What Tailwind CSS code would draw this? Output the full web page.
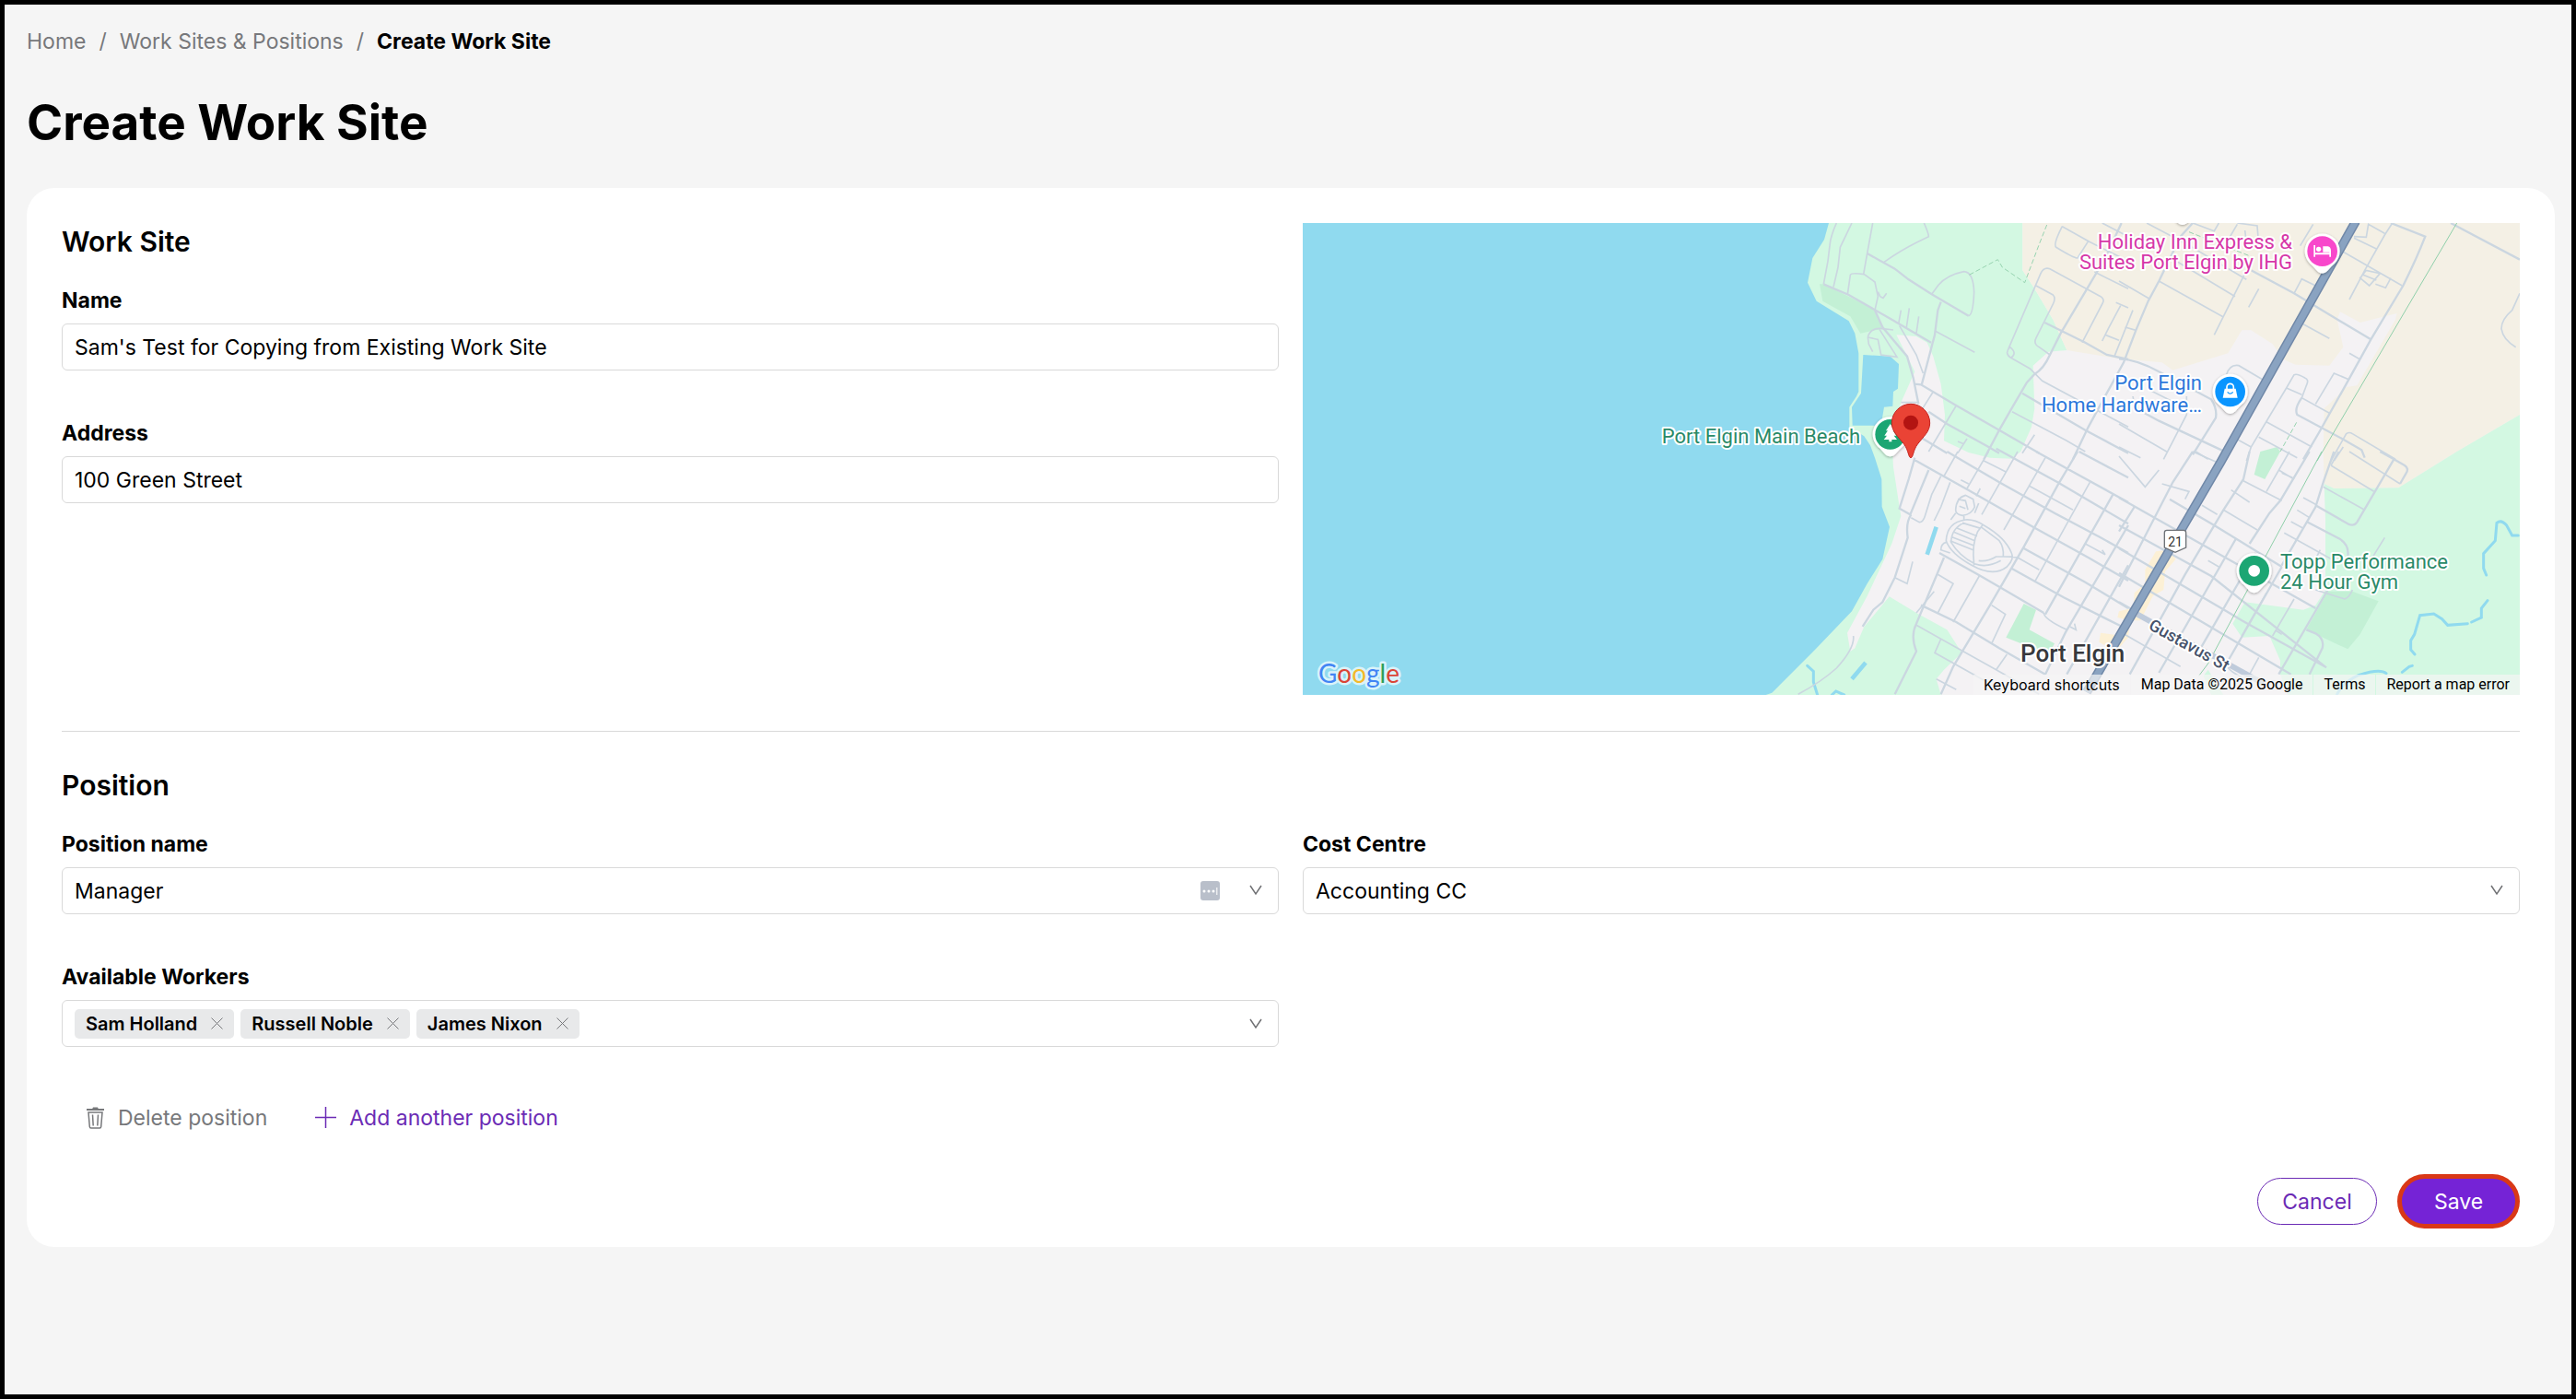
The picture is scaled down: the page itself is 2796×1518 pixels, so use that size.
<!DOCTYPE html>
<html lang="en">
<head>
<meta charset="utf-8">
<meta name="viewport" content="width=device-width, initial-scale=1">
<title>Create Work Site</title>
<script src="https://cdn.jsdelivr.net/npm/@tailwindcss/browser@4"></script>
</head>
<body class="min-h-screen border-5 border-black bg-[#f5f5f5] pt-[25px] pr-[18px] pb-6 pl-6 font-['Inter',sans-serif] text-[23px] leading-[30px] text-black">

<nav aria-label="Breadcrumb">
  <ol class="flex items-center gap-[14px] text-[#77787b]">
    <li><a href="#">Home</a></li>
    <li aria-hidden="true">/</li>
    <li><a href="#">Work Sites &amp; Positions</a></li>
    <li aria-hidden="true">/</li>
    <li aria-current="page" class="font-bold text-black">Create Work Site</li>
  </ol>
</nav>

<h1 class="mt-10 mb-[38px] text-[53px] leading-[66px] font-bold">Create Work Site</h1>

<form class="rounded-[30px] bg-white px-[38px] pt-[38px] pb-5">
  <section class="grid grid-cols-2 gap-[26px] border-b border-[#d9d9d9] pb-[39px]">
    <div>
      <h2 class="mb-[29px] text-[30px] leading-10 font-semibold">Work Site</h2>
      <label for="name" class="mb-2.5 block font-bold">Name</label>
      <input id="name" type="text" value="Sam's Test for Copying from Existing Work Site" class="mb-[53px] block h-[51px] w-full rounded-md border border-[#d9d9d9] bg-white px-[13px]">
      <label for="address" class="mb-2.5 block font-bold">Address</label>
      <input id="address" type="text" value="100 Green Street" class="block h-[51px] w-full rounded-md border border-[#d9d9d9] bg-white px-[13px]">
    </div>

    <div class="relative h-[512px] overflow-hidden">
      <svg class="block h-full w-full" viewBox="0 0 1321 512" preserveAspectRatio="xMidYMid slice" role="img" aria-label="Map of Port Elgin">
        <defs>
          <filter id="shadow" x="-30%" y="-30%" width="160%" height="160%"><feDropShadow dx="0" dy="3" stdDeviation="4" flood-color="#000" flood-opacity=".35"/></filter>
          <path id="pin" fill="#fff" d="M0 72C-16 72-26 50-40 40A57 57 0 1 1 40 40C26 50 16 72 0 72Z" filter="url(#shadow)"/>
        </defs>
        <rect width="1321" height="512" fill="#f4f2f4"/>

        <!-- land cover and water -->
        <g transform="translate(466 -12) scale(.33333)">
          <path fill="#d3f8e2" d="M300 36H946V190L985 250 1045 350 1090 450 1030 455 980 500 985 640 975 700 940 780 910 803 840 800 770 783 690 745 693 660 680 560 655 470 635 425 600 405 535 400 595 520 550 620 520 720 525 830 545 960 550 990 520 1080 440 1250 375 1370 385 1430 400 1420 430 1350 512 1252 600 1305 700 1360 748 1435 690 1490 665 1520 680 1572H100L200 36Z"/>
          <path fill="#f4f0e5" d="M946 36H2565V660L2360 780 2170 898 1960 900 1928 885 1925 780 1928 640 1960 610 2000 570 2035 565 2160 350 2165 330 2045 360 1980 325 1970 350 1990 440 1945 500 1835 497 1795 480 1760 430 1690 385 1660 385 1615 460 1435 515 1400 490 1260 478 1090 450 1045 350 985 250 946 190Z"/>
          <path fill="#d3f8e2" d="M2565 660 2360 780 2170 898 1960 900 1928 885 1932 1000V1230L1900 1280 1860 1295 1670 1270 1630 1340 1660 1385 1750 1380 1785 1460 1785 1505 1810 1572H2565ZM1550 1490 1535 1510 1560 1572 1600 1572Z"/>
          <path fill="#c3f0d5" d="M285 235 298 235 465 318 490 380 418 395 385 340 330 310 295 290ZM950 1275 990 1295 968 1360 1050 1405 1030 1440 892 1385ZM1720 780 1775 765 1785 780 1735 870 1700 855ZM1940 1235H2020L2105 1267 2045 1375 2005 1423 1870 1360Z"/>
          <path fill="#90daef" d="M-1398 36H315L300 90 262 150 246 230 275 290 380 355 400 395 412 460V585L405 600 382 635V700L430 730 450 760 465 800 487 870 488 960 513 1025 490 1130 440 1210 390 1300 270 1425 130 1565 110 1572H-1398Z"/>
          <path fill="#90daef" d="M427 465 515 470 543 495 540 575 525 585 523 632 495 635 485 695H392L390 635 420 590Z"/>
          <path fill="#fcf0d5" d="M1290 1385 1300 1290 1260 1300 1255 1320 1275 1325 1270 1380 1200 1370 1195 1400 1250 1430ZM1380 1105 1420 1100 1445 1130 1410 1170 1405 1230 1370 1250 1330 1330 1305 1330 1310 1240 1345 1210 1345 1165Z"/>
          <g fill="none" stroke="#90daef" stroke-width="14"><path d="M665 1025 635 1115M435 1467 390 1520"/>
          <path stroke-width="9" stroke-linecap="round" d="M245 1477 265 1495V1530L278 1572M325 1572 338 1560 365 1572M2560 1053H2540L2522 1020Q2505 1000 2490 1012L2485 1070 2447 1112V1160L2456 1182M2460 1265 2440 1290V1320L2408 1335M2395 1340 2330 1345 2312 1325 2285 1308 2240 1313 2222 1375 2210 1395V1425L2223 1440M2215 1477 2205 1480 2182 1498M2130 1502Q2110 1485 2040 1508 1990 1530 1970 1570"/></g>
        </g>

        <!-- north-west streets -->
        <g transform="translate(466 -12) scale(.33333)" fill="none" stroke="#cbd6e0" stroke-width="5">
          <path d="M340 36Q320 80 318 110L312 160 298 235M390 36 352 115 345 180 330 245M458 36 440 135 428 203M376 268 385 205Q388 197 430 203L465 228 475 275 465 320M475 260 482 275 492 280 503 265M770 338Q785 335 788 260 785 195 755 194 700 205 672 238L650 268M625 36Q640 70 640 80L600 100Q550 125 495 163M662 388 790 457M550 320 542 365M577 313 568 375M608 340 600 395M545 370 600 465 622 525M442 408Q450 375 490 380L525 384M442 408 475 415 485 465 537 472 480 382M442 408 445 430 458 455M550 620H607M655 585 620 640M730 630 640 780M735 747 755 755M765 738 735 785M908 475Q885 460 905 440 930 460 908 475M900 445 1005 200Q1015 178 1035 185L1200 275Q1215 285 1205 300L1140 425M990 240 1045 270Q1055 280 1045 300L990 410Q980 430 1000 440L1035 465M908 475 970 510 1010 550 1290 700M912 650 1090 745 1150 780M985 725 945 785M1075 47 1160 95 1125 150Q1115 152 1055 115 1045 105 1075 47M1160 95 1290 160M1205 36 1290 80M1180 195 1290 250M1265 305 1225 380 1205 420M1215 400 1260 418M1250 295 1290 312M1305 320 1245 470"/>
          <path stroke-width="7" d="M298 235 380 270 520 350 648 425M465 320 490 375 570 470 590 540 607 625M440 135 530 185 575 220 650 268 770 338M680 293 670 320 660 400 618 560M595 560 615 562 730 630 870 710 1000 785M640 650 700 690 830 762 870 785M600 725 700 785M820 805 870 710 910 640 960 555 985 528Q1015 510 1035 465L1070 395 1150 260 1215 150 1268 36M1018 360 1150 425 1220 465 1290 480M945 590 1150 710 1290 785"/>
          <path stroke="#97d3b0" stroke-width="3" stroke-dasharray="16 8" d="M1025 42 1000 105 953 230 880 180 865 155 772 205"/>
        </g>

        <!-- north-east streets -->
        <g transform="translate(886 -12) scale(.33333)" fill="none" stroke="#cbd6e0" stroke-width="5">
          <path d="M20 375 55 385M0 225 98 282M130 225 340 342M170 150 378 275M430 160 310 400M90 36 230 110 415 220M240 36 310 62 325 36M385 36 450 45 455 110M385 40 350 100M410 60 415 100M570 265 595 218 640 240M455 250 422 310M632 40 590 110M890 36 865 75 800 190 750 285M730 130 922 240M765 85 838 120M765 80 805 82 812 40 865 70M785 215 815 240 850 200 805 190ZM795 205 838 222M835 235 868 247 885 215M600 365 685 412M750 460 785 480M1305 265 1280 320Q1245 350 1245 380 1250 415 1292 440M350 530Q360 495 390 500L472 548M545 573 570 530Q580 525 605 540 620 545 610 565L595 605 685 655M545 573 595 595M640 625 700 525 748 545M545 573 430 765 415 810M480 683 628 765M455 733 580 800M385 740 430 765M690 810 740 722Q750 715 760 722L900 805M700 810 730 765M45 600Q50 640 75 650M0 690 155 780M220 600V660L145 805M250 780 290 805M0 765 70 800M100 580 200 630"/>
          <path stroke-width="7" d="M240 36 200 80 130 225 95 290 55 385 15 490-40 590-100 700-150 805M0 478Q60 480 130 520L300 610Q320 640 315 670L240 790M75 650 130 680 340 778M430 190 570 265 820 415M885 36 997 80Q970 150 925 240L820 415 740 560 650 720 600 805M595 605Q570 640 580 660L730 740 790 775 800 800M1080 36 1305 155"/>
          <path stroke="#8fcfaa" stroke-width="3" d="M1100 36 645 810"/>
          <path stroke="#97d3b0" stroke-width="3" stroke-dasharray="16 8" d="M228 65 430 145M578 685 525 780"/>
        </g>

        <!-- south-west streets -->
        <g transform="translate(466 248) scale(.33333)" fill="none" stroke="#cbd6e0" stroke-width="5">
          <path d="M583 215 610 230Q622 230 628 210L650 140 680 80M710 100 680 180 658 225M530 410 570 430 588 358M765 120 835 0M820 30 890 65M745 92 770 105M813 205 930 0M690 80 735 0M808 120 795 145M670 400 720 430 670 525M805 405 720 555M658 455 600 525M845 500 890 530 845 625M600 565 680 610 860 710 1000 790M680 610 660 655 830 750M665 740 730 775M1020 20 885 255M1165 100 985 425M965 110 1110 190M1150 300 1215 335 1205 320M930 345 1000 385M860 710 895 660M1100 570 1120 580 1115 560M1015 525Q1015 545 1090 580M395 600Q400 640 340 705 290 750 215 790"/>
          <path stroke-width="7" d="M595 20 575 90 545 185 580 205 640 60M583 205Q565 230 572 280L530 410 490 490 460 515 425 570M690 345 600 560Q580 600 600 650L530 790M590 25 760 120 980 245 1160 345 1290 420M700 0 870 100 1050 200 1200 280 1290 330M860-10 1060 100 1290 235M990 0 1290 165M1130 0 1290 85M1125 0 1060 110 950 310 840 500 720 700 680 790M675 330 800 400 870 440 1015 525M950 315 1150 425 1290 510M910 380 1080 475 1290 580M615 500 730 555 870 640 1020 725M1240 140 1020 530M1290 240 1085 590 1020 725M1290 370 1090 725"/>
          <path d="M760 222Q700 230 697 290 710 330 780 370 850 410 895 375 920 350 910 330 890 280 820 240 790 220 760 222ZM755 232Q715 250 713 295 740 340 790 365 830 380 875 355M810 245 870 290Q885 310 883 340M815 240 800 260Q780 300 788 370M803 355Q830 360 860 342 900 340 930 345M750 232 810 250M730 248 798 275M722 262 790 290M716 278 786 305M710 290 785 320M697 295Q680 300 680 320L710 330M728 190Q730 150 760 142L785 155 790 180Q780 205 750 208 728 205 728 190M735 155 760 160 768 190M740 178 760 185M790 200 803 168M712 222 728 200M755 208V222"/>
        </g>

        <!-- south-east streets -->
        <g transform="translate(886 248) scale(.33333)" fill="none" stroke="#cbd6e0" stroke-width="5">
          <path d="M405 95 530 160M340 190 450 255M480 130 555 0M520 60 570 90M530 70 565 85M600 150 640 172M580 190 620 215M560 228 600 250M538 265 700 355M690 45 830 130M665 115 797 188M915 105 750 0M690 45 715 0M865 280 800 385M640 450 735 480Q750 475 760 450M0 15 85 115 130 60M140 105 228 130 215 155M240 0 320 35M365 125 425 165M290 355 330 378M270 175 320 205M480 460 400 600M570 480 500 600M510 582 530 595M455 670 425 725M350 690Q350 710 400 735M10 590 200 700M655 320 630 370"/>
          <path stroke-width="7" d="M165 155 310 240 530 375M0 150 230 280 640 510M0 240 300 405 675 703M0 315 350 520 400 550 670 700M0 395 560 725M0 490 420 730M240 0 175 100 0 440M50 180 0 260M425 0 405 90 340 190 215 400 35 725M380 285 130 720M620 0 525 160 490 200 425 300M445 330 260 650M530 375 350 690M700 0 665 100 640 180 530 370M680 450 520 725M895 25 775 230Q765 245 745 235L640 175M850 0 895 25 930 45Q945 55 935 70L915 105M615 230 720 285Q750 305 745 340M610 580 640 592Q670 610 662 640L620 725"/>
          <path stroke="#8fcfaa" stroke-width="3" d="M660 0 290 690 260 730"/>
          <path stroke="#bfcbdb" stroke-width="18" d="M60 530 470 755"/>
        </g>

        <!-- highway 21 -->
        <path fill="none" stroke="#7088a8" stroke-width="10" d="M1143-2 996 260 851 509"/>
        <path fill="none" stroke="#8aa3c1" stroke-width="7" d="M1143-2 996 260 851 509"/>
        <g transform="translate(886 248) scale(.33333)">
          <path fill="#fff" stroke="#6e7277" stroke-width="4" d="M156 256H210Q218 256 218 264V312L183 328 148 312V264Q148 256 156 256Z"/>
        </g>

        <!-- place pins -->
        <g transform="translate(886 -12) scale(.33333)">
          <use href="#pin" x="207" y="-30"/>
          <use href="#pin" x="662" y="128"/><circle cx="662" cy="128" r="49" fill="#f847cb"/>
          <path fill="#fff" d="M634 108H639V133H685V127H690V146H685V139H639V146H634ZM664 112H680Q690 114 690 127V131H664Z"/><circle cx="650" cy="121" r="8" fill="#fff"/>
          <use href="#pin" x="362" y="585"/><circle cx="362" cy="585" r="49" fill="#0a95ff"/>
          <path fill="#fff" d="M344 575H380L386 605H338Z"/><path fill="none" stroke="#fff" stroke-width="5" d="M351 578V570A11 11 0 0 1 373 570V578"/><path fill="none" stroke="#0a95ff" stroke-width="4" d="M353 586Q362 597 371 586"/>
        </g>
        <g transform="translate(886 248) scale(.33333)"><use href="#pin" x="440" y="388"/><circle cx="440" cy="388" r="49" fill="#1ca673"/><circle cx="440" cy="388" r="19" fill="#fff"/></g>
        <g transform="translate(466 -12) scale(.33333)">
          <use href="#pin" x="515" y="724"/><circle cx="515" cy="724" r="49" fill="#1ca673"/>
          <path fill="#fff" d="M515 690 530 712H524L535 728H527L537 741H520V748H511V741H494L504 728H496L507 712H501Z"/>
          <path fill="#ea4335" stroke="#c5221f" stroke-width="3" d="M582 800C574 800 575 776 560 756 540 730 520 715 520 687A62 62 0 0 1 644 687C644 715 624 730 604 756 589 776 590 800 582 800Z"/>
          <circle cx="582" cy="686" r="24" fill="#b31412"/>
        </g>

        <!-- map labels -->
        <g class="font-['Roboto',sans-serif] text-[22px]" stroke="#fff" stroke-width="4" stroke-linejoin="round" paint-order="stroke">
          <g text-anchor="end">
            <g fill="#d637a8"><text x="1074" y="28">Holiday Inn Express &amp;</text><text x="1074" y="50">Suites Port Elgin by IHG</text></g>
            <g fill="#2c78db"><text x="976" y="181">Port Elgin</text><text x="976" y="205">Home Hardware…</text></g>
            <text x="605" y="239" fill="#2a8a68">Port Elgin Main Beach</text>
          </g>
          <g fill="#2a8a68"><text x="1061" y="375">Topp Performance</text><text x="1061" y="397">24 Hour Gym</text></g>
          <text class="text-[26px] font-medium" x="779" y="476" fill="#37383c">Port Elgin</text>
          <text class="text-[18px] font-medium" x="917" y="440" fill="#47536b" transform="rotate(29 917 440)">Gustavus St</text>
          <text class="text-[14px]" x="947" y="351" text-anchor="middle" fill="#333" stroke="none">21</text>
        </g>
        <text class="font-['Lato',sans-serif] text-[28px]" x="17" y="499" stroke="#d9f3fa" stroke-width="5" stroke-linejoin="round" paint-order="stroke"><tspan fill="#4285f4">G</tspan><tspan fill="#db4437">o</tspan><tspan fill="#f4b92a">o</tspan><tspan fill="#4285f4">g</tspan><tspan fill="#2f9e57">l</tspan><tspan fill="#db4437">e</tspan></text>
      </svg>
      <div class="absolute right-0 bottom-0 flex h-[22px] items-center gap-px font-['Roboto',sans-serif] text-[16px] leading-[22px]">
        <button type="button" class="bg-[#f5f5f5]/70 px-[11px] font-['Inter',sans-serif]">Keyboard shortcuts</button>
        <span class="bg-[#f5f5f5]/70 px-[11px]">Map Data ©2025 Google</span>
        <a href="#" class="bg-[#f5f5f5]/70 px-[11px]">Terms</a>
        <a href="#" class="bg-[#f5f5f5]/70 px-[11px]">Report a map error</a>
      </div>
    </div>
  </section>

  <section class="pt-[38px]">
    <h2 class="mb-[29px] text-[30px] leading-10 font-semibold">Position</h2>
    <div class="grid grid-cols-2 gap-x-[26px] gap-y-[53px]">
      <div>
        <label for="position" class="mb-2.5 block font-bold">Position name</label>
        <div class="relative">
          <select id="position" class="block h-[51px] w-full appearance-none rounded-md border border-[#d9d9d9] bg-white px-[13px]"><option>Manager</option></select>
          <svg class="pointer-events-none absolute top-[15px] right-16 size-[21px]" viewBox="0 0 21 21" aria-hidden="true"><rect width="21" height="21" rx="3" fill="#b9bfca"/><g fill="#fff"><circle cx="4" cy="11" r="1.5"/><circle cx="9" cy="11" r="1.5"/><circle cx="14" cy="11" r="1.5"/><path d="M17 7h1.500v8H17z" opacity=".7"/></g></svg>
          <svg class="pointer-events-none absolute top-[19px] right-[18px] h-3 w-[14px]" viewBox="0 0 14 12" fill="none" stroke="#6f7073" stroke-width="1.500" aria-hidden="true"><path d="M1 1l6 9 6-9"/></svg>
        </div>
      </div>
      <div>
        <label for="cost" class="mb-2.5 block font-bold">Cost Centre</label>
        <div class="relative">
          <select id="cost" class="block h-[51px] w-full appearance-none rounded-md border border-[#d9d9d9] bg-white px-[13px]"><option>Accounting CC</option></select>
          <svg class="pointer-events-none absolute top-[19px] right-[18px] h-3 w-[14px]" viewBox="0 0 14 12" fill="none" stroke="#6f7073" stroke-width="1.500" aria-hidden="true"><path d="M1 1l6 9 6-9"/></svg>
        </div>
      </div>
      <div>
        <label for="workers" class="mb-2.5 block font-bold">Available Workers</label>
        <div class="flex h-[51px] items-center gap-[7px] rounded-md border border-[#d9d9d9] bg-white pr-[17px] pl-[13px]">
          <span class="flex h-8 items-center gap-[15px] rounded-[5px] bg-[#e8e9ea] px-3 text-[20px] font-semibold">Sam Holland
            <button type="button" aria-label="Remove Sam Holland"><svg class="block size-[13px]" viewBox="0 0 13 13" stroke="#77787b" aria-hidden="true"><path d="M.5.5l12 12m0-12l-12 12"/></svg></button></span>
          <span class="flex h-8 items-center gap-[15px] rounded-[5px] bg-[#e8e9ea] px-3 text-[20px] font-semibold">Russell Noble
            <button type="button" aria-label="Remove Russell Noble"><svg class="block size-[13px]" viewBox="0 0 13 13" stroke="#77787b" aria-hidden="true"><path d="M.5.5l12 12m0-12l-12 12"/></svg></button></span>
          <span class="flex h-8 items-center gap-[15px] rounded-[5px] bg-[#e8e9ea] px-3 text-[20px] font-semibold">James Nixon
            <button type="button" aria-label="Remove James Nixon"><svg class="block size-[13px]" viewBox="0 0 13 13" stroke="#77787b" aria-hidden="true"><path d="M.5.5l12 12m0-12l-12 12"/></svg></button></span>
          <input id="workers" type="text" class="min-w-0 flex-1">
          <svg class="h-3 w-[14px]" viewBox="0 0 14 12" fill="none" stroke="#6f7073" stroke-width="1.500" aria-hidden="true"><path d="M1 1l6 9 6-9"/></svg>
        </div>
      </div>
    </div>
  </section>

  <div class="mt-[51px] flex h-[51px] items-center gap-[52px] pl-[27px]">
    <button type="button" class="flex items-center gap-[15px] text-[#77787b]">
      <svg class="h-6 w-[19px]" viewBox="0 0 19 24" fill="none" stroke="currentColor" aria-hidden="true"><path stroke-width="2" d="M0 3h19"/><path fill="currentColor" stroke="none" d="M6 2.500L7 .5h5l1 2z"/><path stroke-width="1.500" d="M2 6h15l-1.300 15.500q-.1 1.500-1.500 1.500H4.800q-1.400 0-1.500-1.500zM6.500 8.500l.7 12M12.500 8.500l-.7 12"/></svg>
      Delete position
    </button>
    <button type="button" class="flex items-center gap-[14px] text-[#6b2bb5]">
      <svg class="size-[23px]" viewBox="0 0 23 23" fill="none" stroke="currentColor" stroke-width="1.500" aria-hidden="true"><path d="M11.500 0v23M0 11.500h23"/></svg>
      Add another position
    </button>
  </div>

  <div class="mt-9 flex items-center justify-end gap-[22px]">
    <button type="button" class="h-[51px] w-[130px] rounded-full border border-[#6b2bb5] text-[#6b2bb5]">Cancel</button>
    <button type="submit" class="h-[59px] w-[133px] rounded-full border-5 border-[#d93817] bg-[#7523d6] text-white">Save</button>
  </div>
</form>
</body>
</html>
